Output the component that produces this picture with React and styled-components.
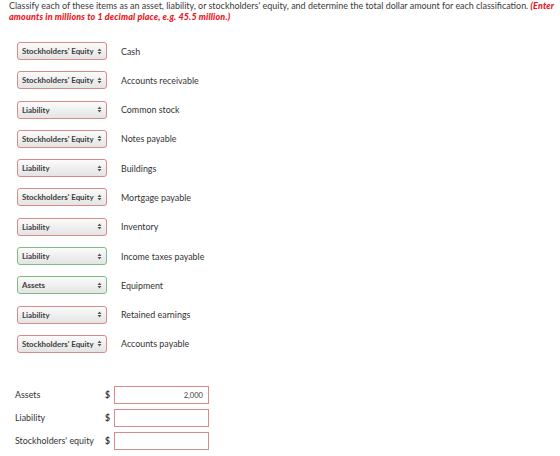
import React from "react";
import styled, { createGlobalStyle } from "styled-components";

const Global = createGlobalStyle`
  html, body { margin: 0; padding: 0; background: #fff; }
  body { font-family: Lato, "Open Sans", sans-serif; color: #333; }
`;

const Page = styled.div`
  padding: 0 9px 0 9px;
  width: 560px;
  box-sizing: border-box;
`;

const Prompt = styled.p`
  margin: 0;
  font-size: 8.95px;
  line-height: 11px;
  color: #3a3a3a;
  width: 545px;
`;

const Note = styled.em`
  color: #e8161b;
  font-weight: 900;
  letter-spacing: 0.15px;
`;

const ItemList = styled.div`
  display: flex;
  flex-direction: column;
  gap: 11.3px;
  margin-top: 20px;
  padding-left: 8px;
`;

const ItemRow = styled.div`
  display: flex;
  align-items: center;
  gap: 14px;
  height: 18px;
`;

const Select = styled.div`
  width: 90px;
  height: 18px;
  box-sizing: border-box;
  border: 1px solid ${(p) => (p.$ok ? "#7cbf85" : "#d98a8a")};
  border-radius: 3px;
  background: linear-gradient(#fbfbfb, #e4e4e4);
  display: flex;
  align-items: center;
  justify-content: space-between;
  padding: 0 4px 0 4px;
  font-size: 7.9px;
  font-weight: 700;
  color: #3d3d3d;
  white-space: nowrap;
`;

const Arrows = styled.svg`
  width: 5px;
  height: 7px;
  display: block;
  flex: none;
`;

const ItemLabel = styled.span`
  font-size: 8.9px;
  color: #333;
`;

const Totals = styled.div`
  display: grid;
  grid-template-columns: 90px 9px 95px;
  row-gap: 5px;
  margin-top: 33px;
  padding-left: 6px;
  align-items: center;
`;

const TotalLabel = styled.span`
  font-size: 8.9px;
  color: #333;
`;

const Dollar = styled.span`
  font-size: 8.6px;
  font-weight: 700;
  color: #333;
`;

const Amount = styled.div`
  height: 18px;
  box-sizing: border-box;
  border: 1px solid #d98a8a;
  background: #fff;
  display: flex;
  align-items: center;
  justify-content: flex-end;
  padding-right: 5px;
  font-size: 7.6px;
  color: #444;
`;

const items = [
  ["Stockholders' Equity", "Cash", false],
  ["Stockholders' Equity", "Accounts receivable", false],
  ["Liability", "Common stock", false],
  ["Stockholders' Equity", "Notes payable", false],
  ["Liability", "Buildings", false],
  ["Stockholders' Equity", "Mortgage payable", false],
  ["Liability", "Inventory", false],
  ["Liability", "Income taxes payable", true],
  ["Assets", "Equipment", true],
  ["Liability", "Retained earnings", false],
  ["Stockholders' Equity", "Accounts payable", false],
];

const totals = [
  ["Assets", "2,000"],
  ["Liability", ""],
  ["Stockholders' equity", ""],
];

function UpDown() {
  return (
    <Arrows viewBox="0 0 5 7">
      <path d="M2.5 0.5 L4.5 3 H0.5 Z" fill="#555" />
      <path d="M2.5 6.5 L4.5 4 H0.5 Z" fill="#555" />
    </Arrows>
  );
}

export default function App() {
  return (
    <Page>
      <Global />
      <Prompt>
        Classify each of these items as an asset, liability, or stockholders' equity, and determine the total dollar amount for each classification.{" "}
        <Note>(Enter amounts in millions to 1 decimal place, e.g. 45.5 million.)</Note>
      </Prompt>
      <ItemList>
        {items.map(([choice, label, ok]) => (
          <ItemRow key={label}>
            <Select $ok={ok}>
              <span>{choice}</span>
              <UpDown />
            </Select>
            <ItemLabel>{label}</ItemLabel>
          </ItemRow>
        ))}
      </ItemList>
      <Totals>
        {totals.map(([label, value]) => (
          <React.Fragment key={label}>
            <TotalLabel>{label}</TotalLabel>
            <Dollar>$</Dollar>
            <Amount>{value}</Amount>
          </React.Fragment>
        ))}
      </Totals>
    </Page>
  );
}
